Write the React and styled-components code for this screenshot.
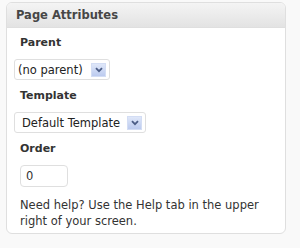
import React, { useState } from 'react';
import styled, { createGlobalStyle } from 'styled-components';

const GlobalStyle = createGlobalStyle`
  html, body {
    margin: 0;
    padding: 0;
    background: #f9f9f9;
  }
  body {
    font-family: "DejaVu Sans", Verdana, sans-serif;
    font-size: 11.5px;
    color: #333;
  }
`;

const Page = styled.div`
  padding: 2px 14px 15px 6px;
  width: 300px;
  box-sizing: border-box;
`;

const Box = styled.div`
  border: 1px solid #dfdfdf;
  border-radius: 6px;
  background: #fff;
  overflow: hidden;
`;

const Header = styled.h3`
  margin: 0;
  height: 24px;
  line-height: 25px;
  padding: 0 9px;
  font-size: 11.5px;
  font-weight: bold;
  color: #464646;
  background: linear-gradient(to bottom, #f4f4f4, #e3e3e3);
  border-bottom: 1px solid #dfdfdf;
`;

const Body = styled.div`
  display: flex;
  flex-direction: column;
  align-items: flex-start;
  padding: 7px 7px 4px;
`;

const Label = styled.p`
  margin: 0 0 8px 6px;
  line-height: 16px;
  font-weight: bold;
  font-size: 11px;
  color: #333;
`;

const SelectBox = styled.div`
  display: flex;
  align-items: center;
  justify-content: space-between;
  box-sizing: border-box;
  width: ${(p) => p.$width}px;
  height: 21px;
  margin-bottom: 8px;
  padding: 0 3px 0 ${(p) => p.$pad}px;
  border: 1px solid #dfdfdf;
  border-radius: 3px;
  background: #fff;
  color: #222;
`;

const Arrow = styled.span`
  display: flex;
  align-items: center;
  justify-content: center;
  width: 15px;
  height: 14px;
  box-sizing: border-box;
  border: 1px solid #d3ddf4;
  background: linear-gradient(to bottom, #dfe7f9, #bccbef);
`;

const NumberInput = styled.input`
  box-sizing: border-box;
  width: 48px;
  height: 22px;
  margin: 0 0 10px 6px;
  padding: 0 5px;
  border: 1px solid #dfdfdf;
  border-radius: 4px;
  font-family: inherit;
  font-size: 11.5px;
  color: #333;
  outline: none;
`;

const Help = styled.p`
  margin: 0 0 0 6px;
  line-height: 16px;
  color: #333;
`;

function Chevron() {
  return (
    <svg width="8" height="6" viewBox="0 0 8 6">
      <path d="M1 1.2 L4 4.2 L7 1.2" fill="none" stroke="#4b5d86" strokeWidth="1.8" />
    </svg>
  );
}

function Select({ value, width, pad }) {
  return (
    <SelectBox $width={width} $pad={pad}>
      <span>{value}</span>
      <Arrow>
        <Chevron />
      </Arrow>
    </SelectBox>
  );
}

export default function App() {
  const [order, setOrder] = useState('0');

  return (
    <Page>
      <GlobalStyle />
      <Box>
        <Header>Page Attributes</Header>
        <Body>
          <Label>Parent</Label>
          <Select value="(no parent)" width={96} pad={3} />
          <Label>Template</Label>
          <Select value="Default Template" width={132} pad={7} />
          <Label>Order</Label>
          <NumberInput value={order} onChange={(e) => setOrder(e.target.value)} />
          <Help>Need help? Use the Help tab in the upper right of your screen.</Help>
        </Body>
      </Box>
    </Page>
  );
}
